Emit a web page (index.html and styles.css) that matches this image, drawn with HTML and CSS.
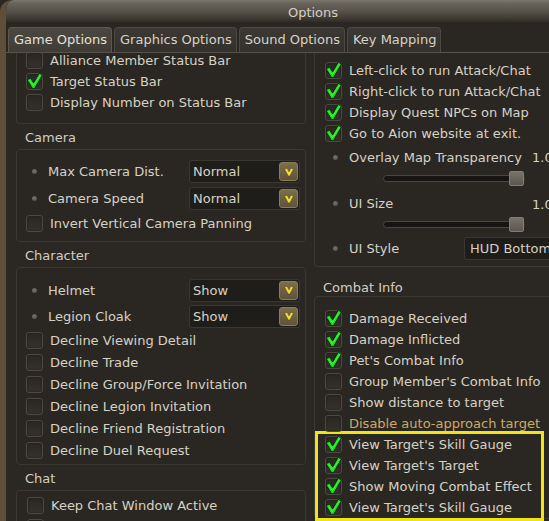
FILE: index.html
```html
<!DOCTYPE html>
<html>
<head>
<meta charset="utf-8">
<link rel="stylesheet" href="styles.css">
</head>
<body>
<svg width="0" height="0" class="defs">
  <defs>
    <symbol id="chk" viewBox="0 0 17 17">
      <path d="M1.2 7.4 L4.8 5.6 L7.6 10.4 L13.2 0.8 L16.4 2.6 L8.6 16 L6.4 16 Z" fill="#1fdc1f" stroke="#0a2e0a" stroke-width="1" stroke-linejoin="round"/>
      <path d="M3.2 7.4 L7.4 13.2 L14.4 2.6" fill="none" stroke="#7dff6a" stroke-width="1" stroke-linecap="round" opacity="0.5"/>
    </symbol>
    <symbol id="arr" viewBox="0 0 12 12">
      <path d="M1.5 3 L4.2 2.2 L6 5.8 L7.8 2.2 L10.5 3 L6.8 10 L5.2 10 Z" fill="#f0dc3a" stroke="#5a4a1a" stroke-width="0.6"/>
    </symbol>
  </defs>
</svg>
<div class="window">
  <div class="titlebar"><span class="title">Options</span></div>
  <div class="tabs">
    <div class="tab active">Game Options</div>
    <div class="tab">Graphics Options</div>
    <div class="tab">Sound Options</div>
    <div class="tab">Key Mapping</div>
  </div>
  <div class="pane">
    <div class="col col-left">
      <div class="box box-first box-l1">
        <div class="row"><span class="cb"></span><span class="lbl">Alliance Member Status Bar</span></div>
        <div class="row"><span class="cb"><svg><use href="#chk"/></svg></span><span class="lbl">Target Status Bar</span></div>
        <div class="row"><span class="cb"></span><span class="lbl">Display Number on Status Bar</span></div>
      </div>
      <div class="head">Camera</div>
      <div class="box box-cam">
        <div class="row drow"><span class="dot"></span><span class="dlbl">Max Camera Dist.</span><span class="dd">Normal<span class="ddbtn"><svg><use href="#arr"/></svg></span></span></div>
        <div class="row drow"><span class="dot"></span><span class="dlbl">Camera Speed</span><span class="dd">Normal<span class="ddbtn"><svg><use href="#arr"/></svg></span></span></div>
        <div class="row row22"><span class="cb"></span><span class="lbl">Invert Vertical Camera Panning</span></div>
      </div>
      <div class="head">Character</div>
      <div class="box box-char">
        <div class="row drow drow26"><span class="dot"></span><span class="dlbl">Helmet</span><span class="dd">Show<span class="ddbtn"><svg><use href="#arr"/></svg></span></span></div>
        <div class="row drow drow26"><span class="dot"></span><span class="dlbl">Legion Cloak</span><span class="dd">Show<span class="ddbtn"><svg><use href="#arr"/></svg></span></span></div>
        <div class="row row22"><span class="cb"></span><span class="lbl">Decline Viewing Detail</span></div>
        <div class="row row22"><span class="cb"></span><span class="lbl">Decline Trade</span></div>
        <div class="row row22"><span class="cb"></span><span class="lbl">Decline Group/Force Invitation</span></div>
        <div class="row row22"><span class="cb"></span><span class="lbl">Decline Legion Invitation</span></div>
        <div class="row row22"><span class="cb"></span><span class="lbl">Decline Friend Registration</span></div>
        <div class="row row22"><span class="cb"></span><span class="lbl">Decline Duel Request</span></div>
      </div>
      <div class="head">Chat</div>
      <div class="box box-chat">
        <div class="row row22 ind1"><span class="cb"></span><span class="lbl">Keep Chat Window Active</span></div>
        <div class="row row22 ind1"><span class="cb"></span></div>
      </div>
    </div>
    <div class="col col-right">
      <div class="box box-first box-r1">
        <div class="row"><span class="cb"><svg><use href="#chk"/></svg></span><span class="lbl">Left-click to run Attack/Chat</span></div>
        <div class="row"><span class="cb"><svg><use href="#chk"/></svg></span><span class="lbl">Right-click to run Attack/Chat</span></div>
        <div class="row"><span class="cb"><svg><use href="#chk"/></svg></span><span class="lbl">Display Quest NPCs on Map</span></div>
        <div class="row"><span class="cb"><svg><use href="#chk"/></svg></span><span class="lbl">Go to Aion website at exit.</span></div>
        <div class="row brow mt3"><span class="dot"></span><span class="blbl">Overlay Map Transparency</span><span class="val">1.0</span></div>
        <div class="row srow"><div class="slider"><div class="thumb"></div></div></div>
        <div class="row brow mt4"><span class="dot"></span><span class="blbl">UI Size</span><span class="val val-low">1.0</span></div>
        <div class="row srow"><div class="slider"><div class="thumb"></div></div></div>
        <div class="row brow stylerow"><span class="dot"></span><span class="slbl">UI Style</span><span class="dd dd-wide">HUD Bottom</span></div>
      </div>
      <div class="head head-combat">Combat Info</div>
      <div class="box box-combat">
        <div class="row"><span class="cb"><svg><use href="#chk"/></svg></span><span class="lbl">Damage Received</span></div>
        <div class="row"><span class="cb"><svg><use href="#chk"/></svg></span><span class="lbl">Damage Inflicted</span></div>
        <div class="row"><span class="cb"><svg><use href="#chk"/></svg></span><span class="lbl">Pet's Combat Info</span></div>
        <div class="row"><span class="cb"></span><span class="lbl">Group Member's Combat Info</span></div>
        <div class="row"><span class="cb"></span><span class="lbl">Show distance to target</span></div>
        <div class="row"><span class="cb"></span><span class="lbl lbl-warn">Disable auto-approach target</span></div>
        <div class="highlight">
          <div class="row"><span class="cb"><svg><use href="#chk"/></svg></span><span class="lbl">View Target's Skill Gauge</span></div>
          <div class="row"><span class="cb"><svg><use href="#chk"/></svg></span><span class="lbl">View Target's Target</span></div>
          <div class="row"><span class="cb"><svg><use href="#chk"/></svg></span><span class="lbl">Show Moving Combat Effect</span></div>
          <div class="row"><span class="cb"><svg><use href="#chk"/></svg></span><span class="lbl">View Target's Skill Gauge</span></div>
        </div>
      </div>
    </div>
  </div>
</div>
</body>
</html>
```
FILE: styles.css
```css
html, body {
  margin: 0;
  padding: 0;
  width: 549px;
  height: 521px;
  overflow: hidden;
  background: #2b2823;
}
.defs { position: absolute; }
.window {
  width: 616px;
  height: 521px;
  box-sizing: border-box;
  border-left: 6px solid #5f4f38;
  border-top-left-radius: 12px;
  background: #2b2823;
  font-family: "DejaVu Sans", "Liberation Sans", sans-serif;
  font-size: 13px;
  color: #d6d2c6;
  display: flex;
  flex-direction: column;
  overflow: hidden;
}
.titlebar {
  height: 22px;
  flex: none;
  background: linear-gradient(to bottom, #7b766b 0px, #67625a 4px, #57534b 11px, #403c35 18px, #2f2b26 22px);
  display: flex;
  justify-content: center;
  align-items: center;
  border-top-left-radius: 8px;
}
.title {
  color: #d4d0c4;
  padding-left: 4px;
  padding-top: 2px;
}
.tabs {
  flex: none;
  height: 31px;
  box-sizing: border-box;
  padding: 5px 0 0 2px;
  display: flex;
  align-items: flex-end;
  gap: 2px;
  border-bottom: 1px solid #57534b;
  background: #2a2722;
}
.tab {
  height: 25px;
  box-sizing: border-box;
  padding: 4px 4px 0 5px;
  background: linear-gradient(to bottom, #3c3934, #34312c);
  border: 1px solid #4c4842;
  border-bottom: none;
  border-radius: 4px 4px 0 0;
  color: #d6d2c6;
  white-space: nowrap;
}
.tab.active {
  background: linear-gradient(to bottom, #4b4842, #403d37);
  border-color: #5c5850;
  color: #e4e0d4;
}
.pane {
  flex: 1;
  display: flex;
  gap: 8px;
  padding-left: 10px;
  overflow: hidden;
  align-items: flex-start;
}
.col-left { width: 290px; flex: none; margin-top: -3px; }
.col-right { flex: 1; }
.box {
  border: 1px solid #3b3731;
  border-radius: 4px;
  background: #2a2722;
}
.box-first {
  border-top: none;
  border-top-left-radius: 0;
  border-top-right-radius: 0;
}
.box-l1 { padding-bottom: 10px; }
.box-cam { padding: 8px 0 7px; }
.box-char { padding: 9px 0 3px; }
.box-chat { padding: 3px 0 0; }
.box-r1 { padding: 7px 0 6px; }
.box-combat { padding: 11px 0 0; }
.head {
  height: 25px;
  box-sizing: border-box;
  padding: 5px 0 0 9px;
  line-height: 18px;
  color: #d2cec2;
}
.head-combat { height: 29px; padding: 12px 0 0 9px; }
.row {
  display: flex;
  align-items: center;
  height: 21px;
  padding-left: 9px;
  white-space: nowrap;
}
.col-right .row { padding-left: 10px; }
.row22 { height: 22px; }
.ind1 { padding-left: 10px; }
.cb {
  width: 17px;
  height: 17px;
  flex: none;
  box-sizing: border-box;
  border: 1px solid #4d4940;
  border-radius: 3px;
  background: linear-gradient(to bottom, #2a2723, #35322c);
  box-shadow: inset 0 0 2px #1c1a17;
  position: relative;
  margin-right: 7px;
}
.cb svg {
  position: absolute;
  left: -1px;
  top: -2px;
  width: 17px;
  height: 18px;
  overflow: visible;
}
.dot {
  width: 5px;
  height: 5px;
  flex: none;
  border-radius: 50%;
  background: radial-gradient(circle at 40% 40%, #7a766c, #4a463f);
  margin-left: 6px;
  margin-right: 11px;
}
.col-right .dot { margin-left: 8px; }
.dlbl { width: 141px; flex: none; }
.drow { height: 27px; }
.drow26 { height: 26px; }
.dd {
  width: 111px;
  height: 23px;
  box-sizing: border-box;
  flex: none;
  background: #1f1d1a;
  border: 1px solid #3a3630;
  border-radius: 3px;
  display: flex;
  align-items: center;
  padding-left: 3px;
  position: relative;
  color: #d6d2c6;
}
.ddbtn {
  position: absolute;
  right: 1px;
  top: 1px;
  width: 19px;
  height: 19px;
  box-sizing: border-box;
  border: 1px solid #8a7d58;
  border-radius: 3px;
  background: linear-gradient(to bottom, #7c6f4e, #5e5239);
  display: flex;
  align-items: center;
  justify-content: center;
}
.ddbtn svg { width: 12px; height: 12px; }
.mt3 { margin-top: 3px; }
.mt4 { margin-top: 4px; }
.blbl { width: 183px; flex: none; }
.val { color: #d6d2c6; }
.val-low { padding-top: 2px; }
.srow { height: 21px; }
.slider {
  margin-left: 58px;
  width: 142px;
  height: 7px;
  box-sizing: border-box;
  border: 1px solid #4a463f;
  border-radius: 4px;
  background: #171513;
  position: relative;
}
.thumb {
  position: absolute;
  right: 0;
  top: -5px;
  width: 15px;
  height: 15px;
  box-sizing: border-box;
  border: 1px solid #837d70;
  border-radius: 2px;
  background: linear-gradient(to bottom, #77726a, #5d584f);
}
.stylerow { height: 23px; margin-top: 2px; }
.slbl { width: 115px; flex: none; }
.dd-wide { width: 140px; padding-left: 5px; }
.lbl-warn { color: #cfa967; }
.highlight {
  width: 223px;
  margin-left: 3px;
  outline: 3px solid #f2e414;
}
.col-right .highlight .row { padding-left: 7px; }
```
